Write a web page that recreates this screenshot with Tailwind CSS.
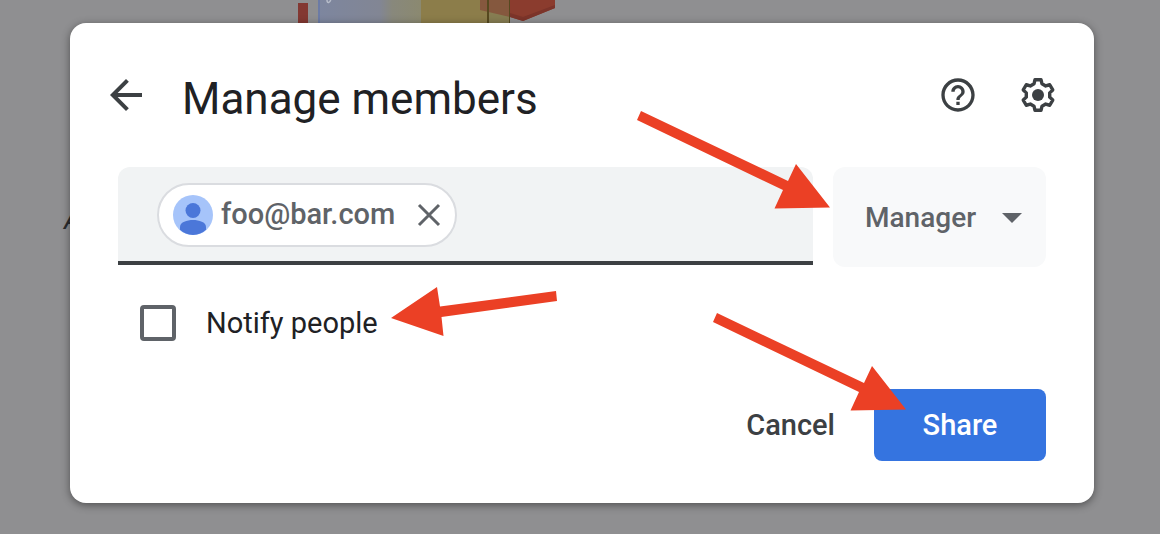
<!DOCTYPE html>
<html lang="en">
<head>
<meta charset="utf-8">
<meta name="viewport" content="width=device-width, initial-scale=1">
<title>Manage members</title>
<script src="https://cdn.jsdelivr.net/npm/@tailwindcss/browser@4"></script>
</head>
<body class="relative min-h-screen overflow-hidden bg-[#8f8f91] pt-[23px] pr-[66px] pb-[31px] pl-[70px] font-['Roboto',sans-serif] text-[29px]">

<!-- Dimmed page behind the dialog -->
<div aria-hidden="true">
  <svg class="absolute top-0 left-[280px]" width="290" height="30" viewBox="0 0 290 30">
    <defs>
      <linearGradient id="panel" x1="0" x2="1" y1="0" y2="0">
        <stop offset="0" stop-color="#7d869f"/><stop offset=".6" stop-color="#828694"/><stop offset=".72" stop-color="#88887c"/><stop offset="1" stop-color="#8b8970"/>
      </linearGradient>
    </defs>
    <path fill="#833832" d="M18 3h10v27H18z"/>
    <path fill="url(#panel)" d="M38 0h103v30H38z"/>
    <path fill="#6c7ba5" d="M38 0h2v30h-2z"/>
    <path d="M47 0c0 4 3 3 4-1" fill="none" stroke="#b7bdca" stroke-width="1.5"/>
    <path fill="#8c7d4a" d="M141 0h67v30h-67z"/>
    <path fill="#867d52" d="M208 0h22v30h-22z"/>
    <path fill="#85583e" d="M200 0h30v17l-30-7z"/>
    <path fill="#8b3c2e" d="M230 0h45v8l-32 13-13-4z"/>
    <path fill="#7c342a" d="M230 13l13 4v4l-13-4zM243 17l32-12v3l-32 13z"/>
    <path fill="#56491f" d="M207 0h2v30h-2zM229 0h1v30h-1z"/>
  </svg>
  <span class="absolute top-[204px] left-[64px] text-[28px] leading-8 text-[#2b2c2f] italic">A</span>
</div>

<main role="dialog" aria-labelledby="title" class="relative rounded-2xl bg-white pt-12 pr-12 pb-[42px] pl-12 shadow-[0_2px_8px_rgba(0,0,0,0.45)]">
  <header class="-mr-4 -ml-4 flex h-12 items-center text-[#3c4043]">
    <button type="button" aria-label="Back" class="shrink-0">
      <svg class="size-12" viewBox="0 0 24 24" fill="currentColor"><path d="M20 11H7.830l5.590-5.590L12 4l-8 8 8 8 1.410-1.410L7.830 13H20z"/></svg>
    </button>
    <h1 id="title" class="mt-2 ml-8 flex-1 text-[44px] leading-[56px] whitespace-nowrap text-[#202124]">Manage members</h1>
    <button type="button" aria-label="Help" class="mr-10 shrink-0">
      <svg class="size-10" viewBox="0 0 24 24" fill="currentColor"><path d="M11 18h2v-2h-2v2zm1-16C6.480 2 2 6.480 2 12s4.480 10 10 10 10-4.480 10-10S17.520 2 12 2zm0 18c-4.410 0-8-3.590-8-8s3.590-8 8-8 8 3.590 8 8-3.590 8-8 8zm0-14c-2.210 0-4 1.790-4 4h2c0-1.100.9-2 2-2s2 .9 2 2c0 2-3 1.750-3 5h2c0-2.250 3-2.500 3-5 0-2.210-1.790-4-4-4z"/></svg>
    </button>
    <button type="button" aria-label="Settings" class="mr-1 shrink-0">
      <svg class="size-10" viewBox="-20 -20 40 40" fill="none"><path stroke="currentColor" stroke-width="3.400" stroke-linejoin="round" d="M-3-15.300H3L4-11.200 7.700-9.060 11.750-10.250 14.750-5.050 11.700-2.140V2.140L14.750 5.050 11.750 10.250 7.700 9.060 4 11.200 3 15.300H-3L-4 11.200-7.700 9.060-11.750 10.250-14.750 5.050-11.700 2.140V-2.140L-14.750-5.050-11.750-10.250-7.700-9.060-4-11.200z"/><circle r="6" fill="currentColor"/></svg>
    </button>
  </header>

  <div class="mt-12 flex items-start gap-5">
    <div class="flex min-w-0 flex-1 items-center rounded-t-xl border-b-4 border-[#3c4043] bg-[#f1f3f4] pt-4 pr-4 pb-[14px] pl-[39px]">
      <div class="flex h-16 w-[300px] shrink-0 items-center rounded-full border-2 border-[#dadce0] bg-white pr-3 pl-[14px] font-medium text-[#5f6368]">
        <svg class="size-10 shrink-0" viewBox="0 0 40 40" aria-hidden="true">
          <circle cx="20" cy="20" r="20" fill="#a6c4fa"/>
          <circle cx="20" cy="15.500" r="7.500" fill="#4b77d9"/>
          <path fill="#4b77d9" d="M7 34.800V32c0-5 7-7 13-7s13 2 13 7v2.800C29.500 38 25 40 20 40S10.500 38 7 34.800z"/>
        </svg>
        <span class="ml-2 flex-1 whitespace-nowrap">foo@bar.com</span>
        <button type="button" aria-label="Remove foo@bar.com" class="shrink-0">
          <svg class="size-7" viewBox="0 0 28 28" fill="none" stroke="currentColor" stroke-width="3"><path d="M4 4l20 20M24 4L4 24"/></svg>
        </button>
      </div>
      <input type="text" aria-label="Add people" class="min-w-0 flex-1 bg-transparent px-2 outline-none">
    </div>
    <div class="relative w-[213px] shrink-0 text-[#5f6368]">
      <select aria-label="Role" class="h-[100px] w-full appearance-none rounded-xl bg-[#f8f9fa] pt-0.5 pl-8 text-[28px] font-medium outline-none">
        <option>Manager</option>
      </select>
      <svg class="pointer-events-none absolute top-[46px] right-6" width="20" height="10" viewBox="0 0 20 10" fill="currentColor" aria-hidden="true"><path d="M0 0h20L10 10z"/></svg>
      <!-- Arrow pointing at the role menu -->
      <svg class="pointer-events-none absolute -top-[57px] right-[214px]" width="196" height="100" viewBox="0 0 196 100" fill="#eb4025" aria-hidden="true"><path d="M5 1L152 71l8-17 34 43.500-55.500 1 8.500-18.500L1 10z"/></svg>
    </div>
  </div>

  <div class="mt-[38px] ml-[22px] flex">
    <label class="relative flex items-center text-[#202124]">
      <input type="checkbox" class="size-9 shrink-0 appearance-none rounded-sm border-4 border-[#5f6368] bg-white checked:bg-[#3574e0]">
      <span class="ml-[30px] whitespace-nowrap leading-9">Notify people</span>
      <!-- Arrow pointing at the checkbox label -->
      <svg class="pointer-events-none absolute -top-[19px] left-[251px]" width="168" height="52" viewBox="0 0 168 52" fill="#eb4025" aria-hidden="true"><path d="M0 32L46 1l3 19.500L165 5l1 10L50.500 31 52.500 50z"/></svg>
    </label>
  </div>

  <footer class="mt-12 flex items-center justify-end font-medium">
    <button type="button" class="h-[72px] px-[39px] pt-0.5 text-[#3c4043]">Cancel</button>
    <div class="relative">
      <button type="button" class="h-[72px] w-[172px] rounded-lg bg-[#3574e0] pt-0.5 text-white">Share</button>
      <!-- Arrow pointing at the share button -->
      <svg class="pointer-events-none absolute -top-[77px] -left-[162px]" width="196" height="100" viewBox="0 0 196 100" fill="#eb4025" aria-hidden="true"><path d="M5 1L152 71l8-17 34 43.500-55.500 1 8.500-18.500L1 10z"/></svg>
    </div>
  </footer>
</main>
</body>
</html>
